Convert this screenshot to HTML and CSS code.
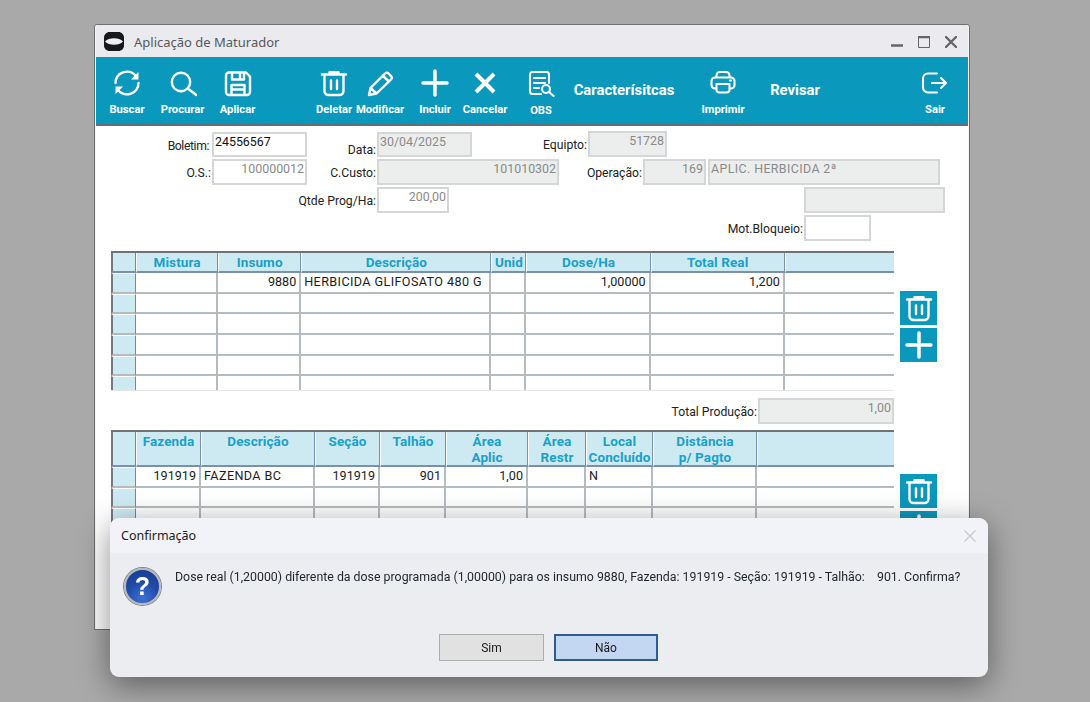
FILE: index.html
```html
<!DOCTYPE html>
<html lang="pt-BR">
<head>
<meta charset="utf-8">
<title>Aplicação de Maturador</title>
<link rel="stylesheet" href="styles.css">
</head>
<body>
<svg class="defs" width="0" height="0" aria-hidden="true">
  <symbol id="i-trash" viewBox="0 0 28 28"><path d="M2 5.500h24M9.500 5V3.200h9V5M4.500 6v16a4 4 0 0 0 4 4h11a4 4 0 0 0 4-4V6M11 11.500v8.500M17 11.500v8.500"/></symbol>
  <symbol id="i-plus" viewBox="0 0 28 28"><path d="M14 2v24M2 14h24"/></symbol>
</svg>
<div class="desktop">
  <section class="window">
    <header class="titlebar">
      <svg class="logo" viewBox="0 0 20 19"><path class="logo-b" d="M5.500 0h9C17.500 0 20 2.500 20 5.500v8c0 3-2.500 5.500-5.500 5.500h-9C2.500 19 0 16.500 0 13.500v-8C0 2.500 2.500 0 5.500 0z"/><path class="logo-w" d="M1 9.500C5 5.200 15 5.200 19 9.500 15 13.800 5 13.800 1 9.500z"/></svg>
      <span class="title">Aplicação de Maturador</span>
      <div class="controls">
        <svg class="ctl" viewBox="0 0 12 12"><path d="M0 9.500h12" class="ctl-line"/></svg>
        <svg class="ctl" viewBox="0 0 12 12"><path d="M.5 1.500h11v10H.5z" class="ctl-thin"/><path d="M0 1h12" class="ctl-line"/></svg>
        <svg class="ctl" viewBox="0 0 12 12"><path d="M1 1l10 10M11 1L1 11" class="ctl-x"/></svg>
      </div>
    </header>
    <nav class="toolbar">
      <div class="tool t-buscar"><svg class="ico" viewBox="0 0 28 28"><path d="M2.500 14A11.500 11.500 0 0 1 22.500 6.500M25.500 14A11.500 11.500 0 0 1 5.500 21.500"/><path class="fill" d="M25.500 3v7.500H18zM2.500 25v-7.500H10z"/></svg><span>Buscar</span></div>
      <div class="tool t-std"><svg class="ico" viewBox="0 0 28 28"><circle cx="12" cy="13" r="9.200"/><path d="M18.800 19.500L27.300 26"/></svg><span>Procurar</span></div>
      <div class="tool t-std"><svg class="ico" viewBox="0 0 28 28"><path d="M5 3.500h17l4 4V23a3 3 0 0 1-3 3H5a3 3 0 0 1-3-3V6.500a3 3 0 0 1 3-3zM8 4v6.500h12V4M16 5.500v3M7.500 26V16h13v10M8 20.500h12"/></svg><span>Aplicar</span></div>
      <div class="tool t-del"><svg class="ico"><use href="#i-trash"/></svg><span>Deletar</span></div>
      <div class="tool t-mod"><svg class="ico" viewBox="0 0 28 28"><path d="M3 26l1.500-7L19 4.500a2.500 2.500 0 0 1 3.500 0L25 7a2.500 2.500 0 0 1 0 3.500L10.500 24.500zM4.500 19l6 5.500M17 7l6 5.500"/></svg><span>Modificar</span></div>
      <div class="tool t-inc"><svg class="ico bold"><use href="#i-plus"/></svg><span>Incluir</span></div>
      <div class="tool t-can"><svg class="ico bolder" viewBox="0 0 28 28"><path d="M5 5l18 18M23 5L5 23"/></svg><span>Cancelar</span></div>
      <div class="tool t-obs"><svg class="ico thin" viewBox="0 0 28 28"><path d="M22 14V5.500a2.500 2.500 0 0 0-2.500-2.500h-14A2.500 2.500 0 0 0 3 5.500v17A2.500 2.500 0 0 0 5.500 25H14M7 9h11M7 14h11M7 19h5"/><circle cx="19" cy="20" r="4"/><path d="M22 23l4.500 4"/></svg><span class="lbl-obs">OBS</span></div>
      <div class="tool-text t-car">Caracterísitcas</div>
      <div class="tool t-imp"><svg class="ico thin" viewBox="0 0 28 28"><path d="M7.500 8V6.500a3.500 3.500 0 0 1 3.500-3.500h6a3.500 3.500 0 0 1 3.500 3.500V8M7.500 19.500H6a3.500 3.500 0 0 1-3.500-3.500v-4A3.500 3.500 0 0 1 6 8.500h16a3.500 3.500 0 0 1 3.500 3.500v4a3.500 3.500 0 0 1-3.500 3.500h-1.500M7.500 15h13v5.500a3 3 0 0 1-3 3h-7a3 3 0 0 1-3-3zM21 11.500h1"/></svg><span>Imprimir</span></div>
      <div class="tool-text t-rev">Revisar</div>
      <div class="tool t-sai"><svg class="ico thin" viewBox="0 0 28 28"><path d="M16 4.500H7a5 5 0 0 0-5 5v9a5 5 0 0 0 5 5h9M11 14h14M20 9l5 5-5 5"/></svg><span>Sair</span></div>
    </nav>
    <main class="content">
      <form class="form">
        <div class="frow">
          <label class="lbl w116 drop-bol">Boletim:</label><div class="fld w95 short active">24556567</div>
          <label class="lbl w70 drop-dat">Data:</label><div class="fld w95 short off">30/04/2025</div>
          <label class="lbl w116 drop-equ">Equipto:</label><div class="fld w79 off right">51728</div>
        </div>
        <div class="frow">
          <label class="lbl w116">O.S.:</label><div class="fld w95 right">100000012</div>
          <label class="lbl w70">C.Custo:</label><div class="fld w182 off right">101010302</div>
          <label class="lbl w84">Operação:</label><div class="fld w63 off right">169</div>
          <div class="fld w232 off gap2 caps">APLIC. HERBICIDA 2ª</div>
        </div>
        <div class="frow">
          <label class="lbl w281">Qtde Prog/Ha:</label><div class="fld w72 right">200,00</div>
          <div class="fld w141 off gap355"></div>
        </div>
        <div class="frow last">
          <label class="lbl w708">Mot.Bloqueio:</label><div class="fld w67"></div>
        </div>
      </form>

      <div class="grid-row">
        <div class="grid-wrap h1">
          <table class="grid">
            <colgroup><col class="c25"><col class="c82"><col class="c83"><col class="c190"><col class="c35"><col class="c124"><col class="c134"><col class="c109"></colgroup>
            <thead><tr class="hd1"><th class="fix"></th><th>Mistura</th><th>Insumo</th><th>Descrição</th><th>Unid</th><th>Dose/Ha</th><th>Total Real</th><th></th></tr></thead>
            <tbody>
              <tr><td class="fix"></td><td></td><td class="num">9880</td><td class="caps">HERBICIDA GLIFOSATO 480 G</td><td></td><td class="num">1,00000</td><td class="num">1,200</td><td></td></tr>
              <tr><td class="fix"></td><td></td><td></td><td></td><td></td><td></td><td></td><td></td></tr>
              <tr><td class="fix"></td><td></td><td></td><td></td><td></td><td></td><td></td><td></td></tr>
              <tr><td class="fix"></td><td></td><td></td><td></td><td></td><td></td><td></td><td></td></tr>
              <tr><td class="fix"></td><td></td><td></td><td></td><td></td><td></td><td></td><td></td></tr>
              <tr><td class="fix"></td><td></td><td></td><td></td><td></td><td></td><td></td><td></td></tr>
            </tbody>
          </table>
        </div>
        <div class="side pt40">
          <div class="sbtn"><svg class="sico"><use href="#i-trash"/></svg></div>
          <div class="sbtn"><svg class="sico bold"><use href="#i-plus"/></svg></div>
        </div>
      </div>

      <div class="total"><label class="lbl w647">Total Produção:</label><div class="fld w136 off right">1,00</div></div>

      <div class="grid-row">
        <div class="grid-wrap h2">
          <table class="grid">
            <colgroup><col class="c25"><col class="c65"><col class="c114"><col class="c65"><col class="c66"><col class="c82"><col class="c58"><col class="c67"><col class="c104"><col class="c137"></colgroup>
            <thead><tr class="hd2"><th class="fix"></th><th>Fazenda</th><th>Descrição</th><th>Seção</th><th>Talhão</th><th>Área<br>Aplic</th><th>Área<br>Restr</th><th>Local<br>Concluído</th><th>Distância<br>p/ Pagto</th><th></th></tr></thead>
            <tbody>
              <tr><td class="fix"></td><td class="num">191919</td><td class="caps">FAZENDA BC</td><td class="num">191919</td><td class="num">901</td><td class="num">1,00</td><td></td><td>N</td><td></td><td></td></tr>
              <tr><td class="fix"></td><td></td><td></td><td></td><td></td><td></td><td></td><td></td><td></td><td></td></tr>
              <tr><td class="fix"></td><td></td><td></td><td></td><td></td><td></td><td></td><td></td><td></td><td></td></tr>
              <tr><td class="fix"></td><td></td><td></td><td></td><td></td><td></td><td></td><td></td><td></td><td></td></tr>
            </tbody>
          </table>
        </div>
        <div class="side pt44">
          <div class="sbtn"><svg class="sico"><use href="#i-trash"/></svg></div>
          <div class="sbtn"><svg class="sico bold"><use href="#i-plus"/></svg></div>
        </div>
      </div>
    </main>
  </section>

  <section class="dialog">
    <header class="dlg-head"><span>Confirmação</span>
      <svg class="dlg-x" viewBox="0 0 12 12"><path d="M.5.500l11 11M11.500.500l-11 11"/></svg>
    </header>
    <div class="dlg-body">
      <div class="qmark">?</div>
      <p class="msg">Dose real (1,20000) diferente da dose programada (1,00000) para os insumo 9880, Fazenda: 191919 - Seção: 191919 - Talhão:    901. Confirma?</p>
    </div>
    <div class="dlg-btns">
      <button class="btn" type="button">Sim</button>
      <button class="btn primary" type="button">Não</button>
    </div>
  </section>
</div>
</body>
</html>
```
FILE: styles.css
```css
* { box-sizing: border-box; }
html, body { margin: 0; padding: 0; height: 100%; overflow: hidden; background: #a9a9a9; }
body { font-family: "Roboto", "Liberation Sans", sans-serif; font-size: 12px; color: #1a1a1a; }
.defs { position: absolute; }
.desktop { position: relative; width: 1090px; height: 702px; overflow: hidden; filter: blur(.4px); }

/* window */
.window { position: absolute; left: 94px; top: 24px; width: 876px; height: 606px; background: #fff; border: 1px solid #6f6f6f; border-radius: 3px 3px 0 0; box-shadow: inset 0 0 0 1px #f4f4f4; display: flex; flex-direction: column; overflow: hidden; }
.titlebar { height: 32px; margin: 0 1px; flex: none; background: #ebebef; display: flex; align-items: center; padding: 1px 0 0 8px; }
.logo { width: 20px; height: 19px; margin-right: 10px; }
.logo-b { fill: #17191c; }
.logo-w { fill: #f0f0f2; }
.title { font-family: "Noto Sans", sans-serif; font-size: 13px; color: #57585c; }
.controls { margin-left: auto; display: flex; gap: 15px; padding-right: 11px; }
.ctl { width: 12px; height: 12px; fill: none; stroke: #666; }
.ctl-line { stroke-width: 2.400; }
.ctl-thin { stroke-width: 1; }
.ctl-x { stroke-width: 2.400; stroke-linecap: round; }

/* toolbar */
.toolbar { height: 69px; margin: 0 1px; flex: none; background: #0b98bd; border-bottom: 2px solid #5f6f74; display: flex; color: #fff; padding-left: 3px; }
.tool { display: flex; flex-direction: column; align-items: center; padding-top: 12px; flex: none; font-weight: 700; font-size: 11.200px; line-height: 14px; white-space: nowrap; }
.tool span { margin-top: 5.500px; }
.ico, .sico { width: 28px; height: 28px; fill: none; stroke: #fff; stroke-width: 2.400; stroke-linecap: round; stroke-linejoin: round; flex: none; }
.ico .fill { fill: #fff; stroke: none; }
.ico.thin { stroke-width: 2.100; }
.ico.bold, .sico.bold { stroke-width: 3.500; }
.ico.bolder { stroke-width: 4; stroke-linecap: butt; }
.lbl-obs { position: relative; top: 1px; }
.tool-text { flex: none; font-weight: 700; font-size: 14.800px; text-align: center; padding-top: 24px; line-height: 18px; }
.t-buscar { width: 56px; }
.t-std { width: 55px; }
.t-del { width: 46px; margin-left: 46px; }
.t-mod { width: 46px; }
.t-inc { width: 46px; margin-left: 9px; }
.t-can { width: 54px; }
.t-obs { width: 46px; margin-left: 6px; }
.t-car { width: 120px; }
.t-imp { width: 60px; margin-left: 9px; }
.t-rev { width: 60px; margin-left: 12px; }
.t-sai { width: 60px; margin-left: 80px; }

/* form */
.content { flex: 1; min-height: 0; margin: 0 1px; background: #fff; padding-top: 5px; }
.frow { display: flex; height: 26px; margin-bottom: 2px; }
.frow.last { margin-bottom: 10px; }
.lbl { display: flex; align-items: center; justify-content: flex-end; padding: 1px 1px 0 0; flex: none; color: #222; font-size: 12.200px; white-space: nowrap; }
.drop-bol { padding-top: 4px; padding-right: 3px; letter-spacing: -.4px; }
.drop-dat { padding-top: 12px; }
.drop-equ { padding-top: 2px; }
.fld { flex: none; height: 26px; border: 2px solid #d4d6d7; background: #fff; color: #8a8a8a; font-size: 12.400px; line-height: 16px; padding: 0 1px; overflow: hidden; white-space: nowrap; }
.fld.short { height: 25px; margin-top: 1px; }
.fld.off { background: #eceeee; }
.fld.right { text-align: right; }
.fld.active { color: #111; }
.caps { letter-spacing: .4px; }
.gap2 { margin-left: 2px; }
.gap355 { margin-left: 355px; }
.w63 { width: 63px; } .w67 { width: 67px; } .w70 { width: 70px; } .w72 { width: 72px; }
.w79 { width: 79px; } .w84 { width: 84px; } .w95 { width: 95px; } .w116 { width: 116px; }
.w136 { width: 136px; } .w141 { width: 141px; } .w182 { width: 182px; } .w232 { width: 232px; }
.w281 { width: 281px; } .w647 { width: 647px; } .w708 { width: 708px; }

/* grids */
.grid-row { display: flex; padding-left: 15px; }
.grid-wrap { width: 783px; overflow: hidden; flex: none; }
.grid-wrap.h1 { height: 140px; border-bottom: 1px solid #e4e6e7; }
.grid-wrap.h2 { height: 198px; }
.grid { width: 783px; table-layout: fixed; border-collapse: separate; border-spacing: 0; border-top: 2px solid #6f7375; }
.grid th, .grid td { padding: 0 2px; border-right: 2px solid #b5bcc1; border-bottom: 2px solid #b5bcc1; font-weight: 400; overflow: hidden; white-space: nowrap; }
.grid td { height: 20.700px; font-size: 12.600px; line-height: 14px; color: #1c1c1c; padding: 0 3px; }
.grid td.num { text-align: right; }
.grid th { background: #cdeaf3; color: #19a0c9; font-weight: 700; font-size: 13.500px; letter-spacing: .1px; line-height: 16px; text-align: center; vertical-align: top; border-right: 1px solid #7a8fb0; border-left: 1px solid #fff; border-bottom: 2px solid #7a90b0; padding: 1px 0 0; }
.grid th:last-child, .grid td:last-child { border-right: 0; }
.grid .fix { background: #cdeaf3; border-left: 2px solid #75797b; border-top: 1px solid #fff; border-right: 1px solid #6f87ab; border-bottom: 2px solid #b5bcc1; padding: 0; }
.grid th.fix { border-bottom-color: #7a90b0; border-top: 0; }
.hd1 th { height: 20px; }
.hd2 th { height: 35px; }
.c25 { width: 25px; } .c35 { width: 35px; } .c58 { width: 58px; } .c65 { width: 65px; }
.c66 { width: 66px; } .c67 { width: 67px; } .c82 { width: 82px; } .c83 { width: 83px; }
.c104 { width: 104px; } .c109 { width: 109px; } .c114 { width: 114px; } .c124 { width: 124px; }
.c134 { width: 134px; } .c137 { width: 137px; } .c190 { width: 190px; }
.side { margin-left: 6px; display: flex; flex-direction: column; gap: 3px; }
.pt40 { padding-top: 40px; }
.pt44 { padding-top: 44px; }
.sbtn { width: 37px; height: 34px; background: #0b98bd; display: flex; align-items: center; justify-content: center; }
.total { display: flex; padding-left: 15px; margin: 7px 0 6px; }

/* dialog */
.dialog { position: absolute; left: 110px; top: 518px; width: 878px; height: 159px; border-radius: 9px; background: #ecedf1; box-shadow: 0 8px 32px rgba(0,0,0,.45); overflow: hidden; display: flex; flex-direction: column; }
.dlg-head { height: 35px; flex: none; background: #f1f3f9; display: flex; align-items: center; justify-content: space-between; padding: 0 12px 0 11px; font-family: "Noto Sans", sans-serif; font-size: 12.500px; color: #222; }
.dlg-x { width: 12px; height: 12px; fill: none; stroke: #c6c8cc; stroke-width: 1.200; }
.dlg-body { flex: 1; display: flex; padding: 15px 0 0 14px; }
.qmark { width: 37px; height: 37px; flex: none; border-radius: 50%; border: 2px solid #b4b8be; background: radial-gradient(circle at 50% 85%, #3d72d8 0%, #1f4aa5 50%, #143a8e 100%); color: #fff; font-family: "Liberation Sans", sans-serif; font-weight: 700; font-size: 25px; line-height: 33px; text-align: center; box-shadow: 0 0 0 1px #80858d; }
.msg { margin: 1px 0 0 14px; font-size: 12.350px; line-height: 16px; color: #1e2430; white-space: pre; }
.dlg-btns { height: 43px; flex: none; display: flex; padding-left: 329px; gap: 10px; }
.btn { width: 105px; height: 27px; background: #e1e1e1; border: 1px solid #adadad; font-family: "Roboto", sans-serif; font-size: 12px; color: #1a1a1a; padding: 1px 0 0; }
.btn.primary { background: #c3d6f2; border: 2px solid #2f5d92; width: 104px; }
```
